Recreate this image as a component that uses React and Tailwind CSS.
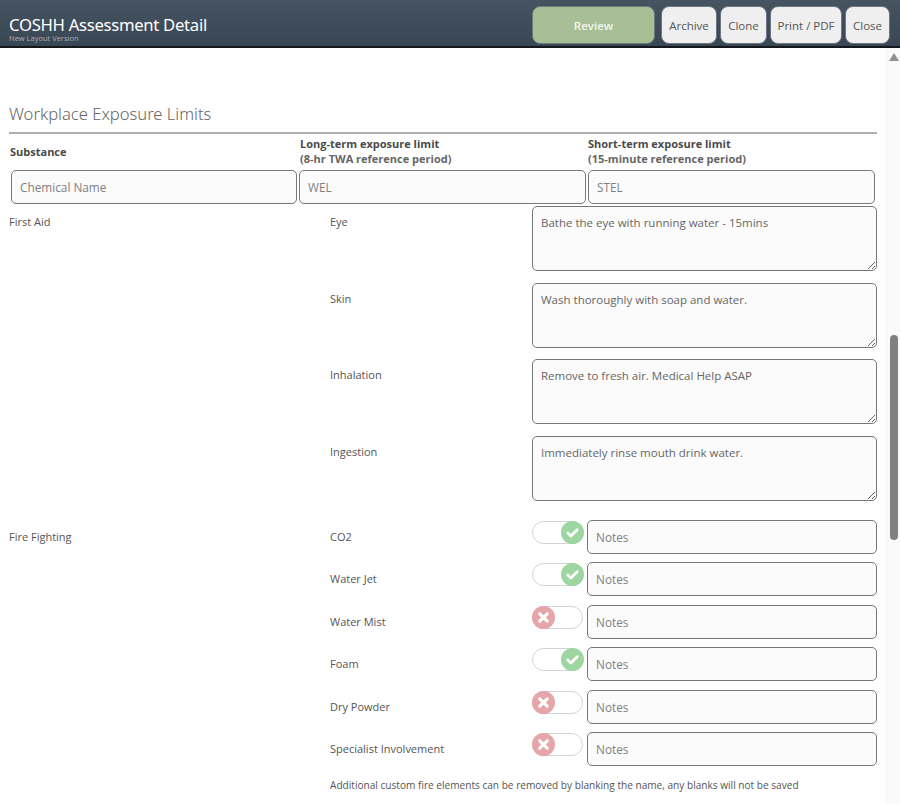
import React from 'react';

const firstAid = [
  { label: 'Eye', value: 'Bathe the eye with running water - 15mins' },
  { label: 'Skin', value: 'Wash thoroughly with soap and water.' },
  { label: 'Inhalation', value: 'Remove to fresh air. Medical Help ASAP' },
  { label: 'Ingestion', value: 'Immediately rinse mouth drink water.' },
];

const fireFighting = [
  { label: 'CO2', on: true },
  { label: 'Water Jet', on: true },
  { label: 'Water Mist', on: false },
  { label: 'Foam', on: true },
  { label: 'Dry Powder', on: false },
  { label: 'Specialist Involvement', on: false },
];

const inputClass =
  'h-[34px] rounded-[5px] border border-[#777] bg-[#fbfbfb] px-[8px] text-[11.8px] text-[#666] placeholder:text-[#808080] outline-none';

const HeaderButton = ({ children, className }) => (
  <button className={`h-[38px] rounded-[8px] border border-[#6d7782] pt-px text-[11.5px] ${className}`}>
    {children}
  </button>
);

const Toggle = ({ on }) => (
  <div className="relative -ml-px mt-px h-[23px] w-[51px] shrink-0 rounded-full border border-[#d4d4d4] bg-white">
    {on ? (
      <div className="absolute -right-[2px] -top-px flex h-[23px] w-[23px] items-center justify-center rounded-full bg-[#9dd6a1]">
        <svg width="15" height="15" viewBox="0 0 16 16" fill="none" stroke="white" strokeWidth="3" strokeLinecap="round" strokeLinejoin="round">
          <path d="M3 8.5l3.3 3.2L13 5" />
        </svg>
      </div>
    ) : (
      <div className="absolute -left-px -top-px flex h-[23px] w-[23px] items-center justify-center rounded-full bg-[#e6a5a9]">
        <svg width="13" height="13" viewBox="0 0 14 14" fill="none" stroke="white" strokeWidth="3.4" strokeLinecap="round">
          <path d="M3 3l8 8M11 3l-8 8" />
        </svg>
      </div>
    )}
  </div>
);

export default function App() {
  return (
    <div className="flex h-[804px] w-[900px] flex-col overflow-hidden bg-white font-['Open_Sans',sans-serif] text-[#555]">
      <header className="flex h-[48px] shrink-0 items-start justify-between border-b-2 border-[#15191e] bg-gradient-to-b from-[#465361] to-[#394653] pl-[9px] pr-[10px] pt-[6px]">
        <div className="pt-[11px]">
          <h1 className="font-['Noto_Sans',sans-serif] text-[16.7px] leading-[16px] tracking-[-0.3px] text-white">COSHH Assessment Detail</h1>
          <div className="mt-px text-[7.5px] leading-[9px] text-[#a9b0b8]">New Layout Version</div>
        </div>
        <div className="flex">
          <HeaderButton className="mr-[6px] w-[123px] bg-[#a8bf96] font-semibold text-[#f2f5ef]">Review</HeaderButton>
          <HeaderButton className="mr-[3px] w-[56px] bg-[#efefef] text-[#555]">Archive</HeaderButton>
          <HeaderButton className="mr-[3px] w-[47px] bg-[#efefef] text-[#555]">Clone</HeaderButton>
          <HeaderButton className="mr-[3px] w-[72px] bg-[#efefef] text-[#555]">Print / PDF</HeaderButton>
          <HeaderButton className="w-[45px] bg-[#efefef] text-[#555]">Close</HeaderButton>
        </div>
      </header>

      <div className="flex min-h-0 flex-1">
        <main className="w-[885px] shrink-0 pl-[9px] pr-[8px] pt-[54px]">
          <h2 className="font-['Noto_Sans',sans-serif] text-[16.6px] font-light leading-[24px] text-[#666]">Workplace Exposure Limits</h2>
          <div className="mt-[6px] border-t-2 border-[#b0b0b0]" />

          <div className="grid grid-cols-[290px_289px_1fr] pt-[2px] text-[11px] font-bold leading-[15px] text-[#4a4a4a]">
            <div className="flex items-center pl-px">Substance</div>
            <div className="pl-px">
              Long-term exposure limit
              <br />
              <span className="text-[#666]">(8-hr TWA reference period)</span>
            </div>
            <div>
              Short-term exposure limit
              <br />
              <span className="text-[#666]">(15-minute reference period)</span>
            </div>
          </div>

          <div className="mt-[4px] flex gap-[2px] pl-[2px]">
            <input className={`w-[286px] ${inputClass}`} placeholder="Chemical Name" />
            <input className={`w-[287px] ${inputClass}`} placeholder="WEL" />
            <input className={`w-[287px] ${inputClass}`} placeholder="STEL" />
          </div>

          <section className="mt-[2px] flex text-[11px] leading-[16px]">
            <div className="w-[321px] shrink-0 pt-[8px]">First Aid</div>
            <div className="flex flex-1 flex-col gap-[11.7px]">
              {firstAid.map((row) => (
                <div key={row.label} className="flex">
                  <div className="w-[203px] shrink-0 pt-[8px]">{row.label}</div>
                  <textarea
                    className="-ml-px h-[65px] w-[345px] rounded-[5px] border border-[#777] bg-[#fbfbfb] px-[8px] py-[8px] text-[11.5px] leading-[16px] text-[#666] outline-none"
                    defaultValue={row.value}
                  />
                </div>
              ))}
            </div>
          </section>

          <section className="mt-[19px] flex text-[11px] leading-[16px]">
            <div className="w-[321px] shrink-0 pt-[9px]">Fire Fighting</div>
            <div className="flex flex-1 flex-col gap-[8.4px]">
              {fireFighting.map((row) => (
                <div key={row.label} className="flex">
                  <div className="w-[203px] shrink-0 pt-[9px]">{row.label}</div>
                  <Toggle on={row.on} />
                  <input className={`ml-[4px] w-[290px] ${inputClass}`} placeholder="Notes" />
                </div>
              ))}
              <div className="pt-[4px] text-[10.1px] leading-[14px]">
                Additional custom fire elements can be removed by blanking the name, any blanks will not be saved
              </div>
            </div>
          </section>
        </main>

        <div className="flex w-[15px] shrink-0 flex-col items-center bg-[#fafafa] pl-[3px]">
          <div className="mt-[5px] h-0 w-0 border-x-[5.5px] border-b-[8px] border-x-transparent border-b-[#909090]" />
          <div className="mt-[274px] h-[205px] w-[8px] rounded-[4px] bg-[#808080]" />
        </div>
      </div>
    </div>
  );
}
